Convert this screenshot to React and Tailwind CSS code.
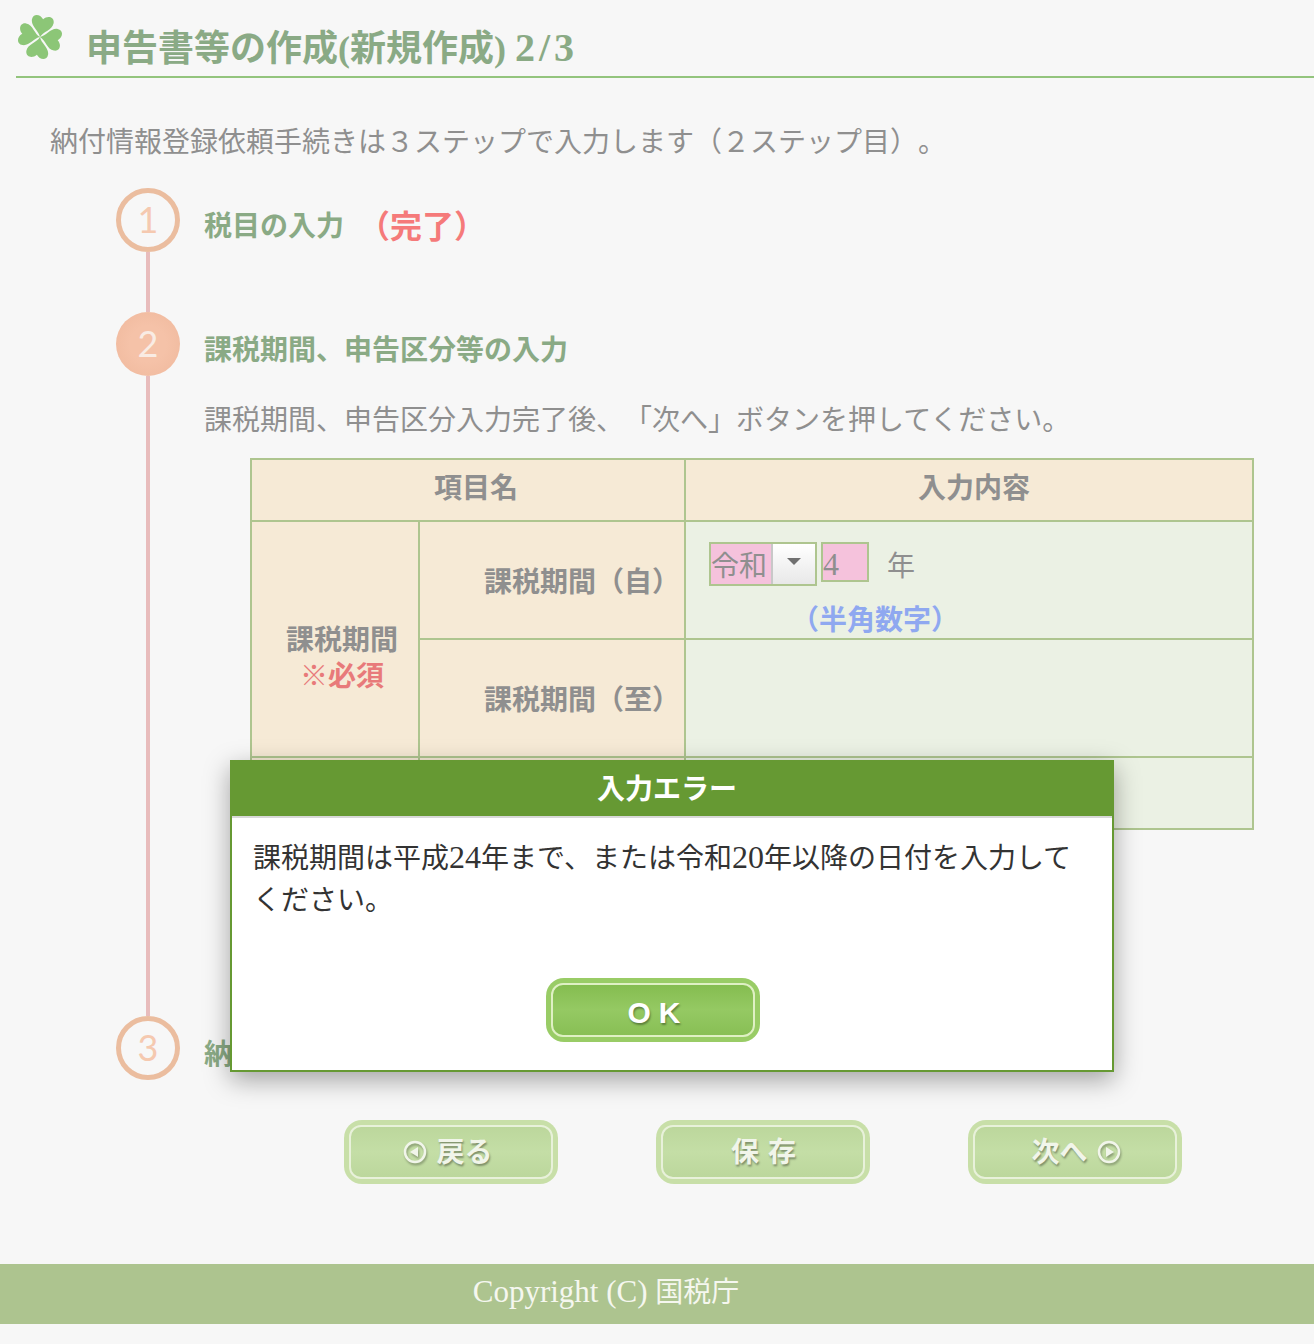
const SERIF = "font-['Liberation_Serif','Noto_Sans_CJK_JP',serif]";

function Clover() {
  const leaf = "M0 0 C-2 -6 -11 -9 -11 -16 C-11 -22 -4 -23 0 -18 C4 -23 11 -22 11 -16 C11 -9 2 -6 0 0 Z";
  return (
    <svg className="w-[46px] h-[46px] shrink-0 blur-[0.5px]" viewBox="-23 -23 46 46">
      {[10, 100, 190, 280].map((a) => (
        <path key={a} d={leaf} fill="#8cc677" transform={`rotate(${a})`} />
      ))}
    </svg>
  );
}

function StepCircle({ n, active }) {
  return (
    <div
      className={`w-16 h-16 shrink-0 rounded-full flex items-center justify-center pb-[3px] font-['Lato',sans-serif] text-[36px] leading-none ${
        active
          ? "bg-[radial-gradient(circle,#f5c2a8_40%,#efb89c_100%)] text-[#f9ece4]"
          : "border-[5px] border-[#ebbd9f] bg-[#f7f7f7] text-[#f5c9b0]"
      }`}
    >
      {n}
    </div>
  );
}

function GreenButton({ children, strong }) {
  return (
    <div className={`w-[214px] h-16 rounded-[18px] p-[5px] ${strong ? "bg-[#99cc66]" : "bg-[#c8dfa8]"}`}>
      <div
        className={`w-full h-full rounded-[12px] border-2 flex items-center justify-center gap-[9px] text-white font-bold font-['Noto_Sans_CJK_JP',sans-serif] [text-shadow:1px_2px_2px_rgba(0,0,0,0.35)] ${
          strong
            ? "border-[#dff0c4] bg-gradient-to-b from-[#85bd50] via-[#95c963] to-[#88bf55]"
            : "border-[#e8f1da] bg-gradient-to-b from-[#bcd79c] via-[#c4dea6] to-[#bcd79c]"
        }`}
      >
        {children}
      </div>
    </div>
  );
}

function ArrowIcon({ dir }) {
  return (
    <svg className="w-6 h-6 drop-shadow-[1px_2px_1px_rgba(0,0,0,0.3)]" viewBox="0 0 24 24">
      <circle cx="12" cy="12" r="10" fill="none" stroke="#f1f5ea" strokeWidth="2.5" />
      <path d={dir === "left" ? "M7 12 L15 7 V17 Z" : "M17 12 L9 7 V17 Z"} fill="#f1f5ea" />
    </svg>
  );
}

export default function App() {
  return (
    <div className={`relative w-[1314px] h-[1344px] overflow-hidden bg-[#f7f7f7] text-[28px] text-[#8f8f8f] [text-spacing-trim:space-all] ${SERIF}`}>
      {/* Page title */}
      <div className="ml-4 h-[78px] border-b-2 border-[#93c47d] flex items-start">
        <div className="ml-[1px] mt-[14px]">
          <Clover />
        </div>
        <h1 className="ml-[23px] mt-[24px] text-[36px] leading-[48px] font-bold text-[#8aaa85] whitespace-nowrap">
          申告書等の作成(新規作成) <span className="text-[40px] tracking-[4px]">2/3</span>
        </h1>
      </div>

      <p className="ml-[50px] mt-[44px] leading-[42px] whitespace-nowrap">
        納付情報登録依頼手続きは３ステップで入力します（２ステップ目）。
      </p>

      {/* Steps */}
      <div className="ml-[116px] mt-[24px] flex flex-col">
        <div className="flex h-[124px]">
          <div className="flex flex-col items-center w-16">
            <StepCircle n="1" />
            <div className="w-1 flex-1 bg-[#e8bcbc]" />
          </div>
          <div className="ml-[24px] h-[78px] flex items-center whitespace-nowrap font-bold text-[#8aaa85]">
            税目の入力
            <span className="ml-[14px] text-[32px] text-[#f57a7a]">（完了）</span>
          </div>
        </div>

        <div className="flex h-[704px]">
          <div className="flex flex-col items-center w-16">
            <StepCircle n="2" active />
            <div className="w-1 flex-1 bg-[#e8bcbc]" />
          </div>
          <div className="ml-[24px]">
            <div className="h-[78px] flex items-center font-bold text-[#8aaa85]">
              課税期間、申告区分等の入力
            </div>
            <p className="leading-[42px] whitespace-nowrap mt-[10px]">
              課税期間、申告区分入力完了後、「次へ」ボタンを押してください。
            </p>
            <table className="ml-[46px] mt-[16px] w-[1004px] table-fixed border-collapse [&_td]:border-2 [&_td]:border-[#aec58f] [&_th]:border-2 [&_th]:border-[#aec58f]">
              <colgroup>
                <col className="w-[168px]" />
                <col className="w-[266px]" />
                <col />
              </colgroup>
              <tbody>
                <tr className="h-[62px] bg-[#f6ead6] font-bold">
                  <th colSpan={2} className="pl-4 pb-[2px]">項目名</th>
                  <th className="pl-[10px] pb-[2px]">入力内容</th>
                </tr>
                <tr className="h-[118px]">
                  <td rowSpan={2} className="bg-[#f6ead6] font-bold text-center pl-[14px] leading-[36px] pt-[40px]">
                    課税期間
                    <br />
                    <span className="text-[#e87a7a]">※必須</span>
                  </td>
                  <td className="bg-[#f6ead6] font-bold text-right pr-[4px] pt-[6px] whitespace-nowrap">課税期間（自）</td>
                  <td className="bg-[#ebf1e4] align-top pl-[23px] pt-[20px]">
                    <div className="flex items-start">
                      <div className="w-[108px] h-[44px] border-2 border-[#aec58f] flex">
                        <div className="w-[60px] bg-[#f5c2dc] leading-[46px] whitespace-nowrap">令和</div>
                        <div className="flex-1 border-l-2 border-[#c8c8c8] bg-gradient-to-b from-white to-[#e8e8e8] flex items-center justify-center">
                          <div className="mb-[6px] border-x-[7px] border-x-transparent border-t-[7px] border-t-[#707070]" />
                        </div>
                      </div>
                      <div className="ml-1 w-12 h-10 border-2 border-[#aec58f] bg-[#f5c2dc] text-[32px] leading-[40px]">4</div>
                      <span className="ml-[18px] mt-[3px] leading-[44px]">年</span>
                    </div>
                    <div className="ml-[82px] mt-[15px] leading-[34px] font-bold whitespace-nowrap text-[#8fa8f0]">（半角数字）</div>
                  </td>
                </tr>
                <tr className="h-[118px]">
                  <td className="bg-[#f6ead6] font-bold text-right pr-[4px] pt-[6px] whitespace-nowrap">課税期間（至）</td>
                  <td className="bg-[#ebf1e4]" />
                </tr>
                <tr className="h-[72px]">
                  <td className="bg-[#f6ead6]" />
                  <td className="bg-[#f6ead6]" />
                  <td className="bg-[#ebf1e4]" />
                </tr>
              </tbody>
            </table>
          </div>
        </div>

        <div className="flex h-16">
          <StepCircle n="3" />
          <div className="ml-[24px] h-[78px] flex items-center font-bold text-[#8aaa85]">納付情報の登録</div>
        </div>
      </div>

      {/* Page buttons */}
      <div className="ml-[344px] mt-10 flex gap-[98px]">
        <GreenButton>
          <ArrowIcon dir="left" />
          <span className="text-[28px] text-[#f1f5ea] pb-1 mr-[6px]">戻る</span>
        </GreenButton>
        <GreenButton>
          <span className="text-[28px] text-[#f1f5ea] tracking-[9px] pb-1 ml-[10px]">保存</span>
        </GreenButton>
        <GreenButton>
          <span className="text-[28px] text-[#f1f5ea] pb-1 ml-[2px]">次へ</span>
          <ArrowIcon dir="right" />
        </GreenButton>
      </div>

      {/* Footer */}
      <div className="mt-20 h-[60px] bg-[#adc48f]">
        <p className="w-[1212px] text-center leading-[56px] text-[#f5f7ef]">
          <span className="text-[31px]">Copyright (C) </span>国税庁
        </p>
      </div>

      {/* Error dialog */}
      <div className="absolute left-[230px] top-[760px] w-[884px] h-[312px] bg-white border-2 border-t-0 border-[#669933] shadow-[0_8px_24px_rgba(0,0,0,0.35)]">
        <div className="h-[56px] pt-[4px] pr-[10px] bg-[#669933] flex items-center justify-center font-bold text-white">入力エラー</div>
        <div className="h-[2px] bg-[#d8d8d8]" />
        <p className="mt-[20px] px-[21px] leading-[42px] text-[#333333]">
          課税期間は平成<span className="text-[32px] leading-none">24</span>年まで、または令和<span className="text-[32px] leading-none">20</span>年以降の日付を入力してください。
        </p>
        <div className="mt-[56px] ml-[314px]">
          <GreenButton strong>
            <span className="font-['Liberation_Sans',sans-serif] text-[30px] tracking-[8px] pt-1 ml-[10px]">OK</span>
          </GreenButton>
        </div>
      </div>
    </div>
  );
}
